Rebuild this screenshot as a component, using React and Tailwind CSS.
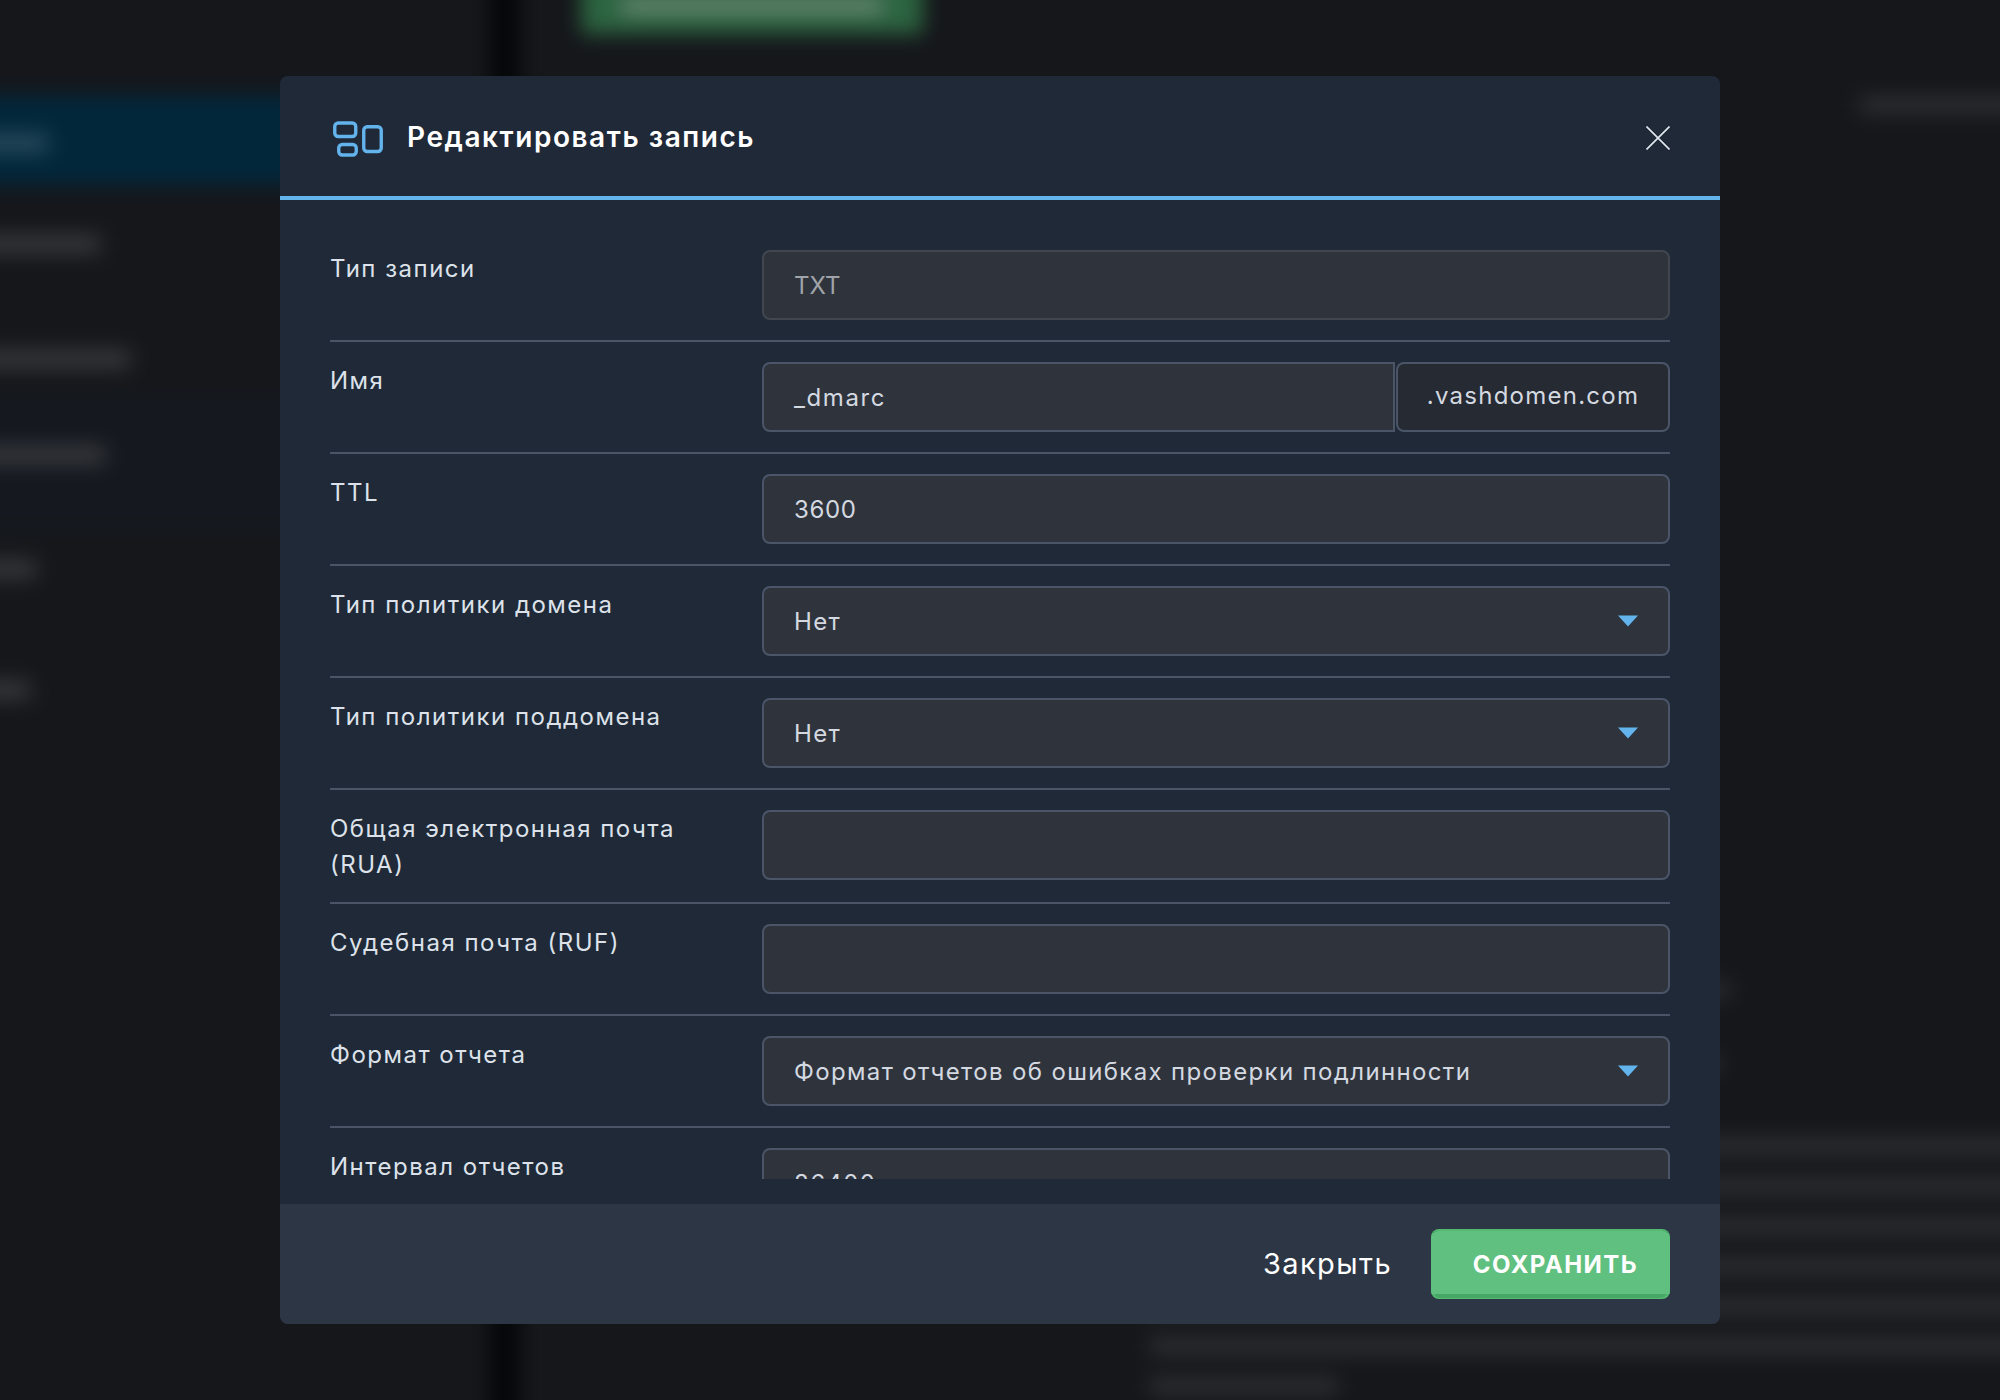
const font = { fontFamily: '"Inter", "Noto Sans", sans-serif' };

function Chevron() {
  return (
    <svg width="20" height="12" viewBox="0 0 20 12" className="shrink-0">
      <path d="M0 0.5h20L10 11.5z" fill="#63b3ed" />
    </svg>
  );
}

function Row({ label, children, last }) {
  return (
    <div className={last ? "flex" : "flex border-b-2 border-[#4a5568] pb-5 mb-5"}>
      <div className="w-[432px] shrink-0 pr-4 pt-px -mb-px text-[24px] leading-[36px] tracking-[1.5px] text-[#dde2ea]">{label}</div>
      <div className="flex-1 min-w-0 flex">{children}</div>
    </div>
  );
}

function Field({ value, disabled, select, className = "rounded-lg", tracking = "tracking-[1.35px]" }) {
  return (
    <div
      className={`h-[70px] flex-1 min-w-0 flex items-center justify-between border-2 pl-[30px] pr-[30px] text-[24px] bg-[#2f343c] ${tracking} ${className} ${
        disabled ? "border-[#41464f] text-[#a0a4aa]" : "border-[#4a5568] text-[#d4d9e1]"
      }`}
    >
      <span className="pt-[2px]">{value}</span>
      {select && <Chevron />}
    </div>
  );
}

function SideLine({ w, mt }) {
  return <div className={`h-[18px] bg-[#38393d] ${mt}`} style={{ width: w }} />;
}

function TextLine({ w = "900px" }) {
  return <div className="h-[14px] mb-[26px] bg-[#313337]" style={{ width: w }} />;
}

function Page() {
  return (
    <div className="h-[1500px] w-[2100px] -ml-[50px] -mt-[50px] flex blur-[10px] bg-[#15171b]">
      <aside className="w-[540px] shrink-0 flex flex-col pt-[145px]">
        <div className="h-[90px] bg-[#02273b] flex items-center">
          <div className="h-[18px] w-[98px] bg-[#2a4c5e] mt-[5px]" />
        </div>
        <SideLine w="150px" mt="mt-[50px]" />
        <SideLine w="180px" mt="mt-[97px]" />
        <div className="mt-[30px] h-[130px] bg-[#15191f] flex flex-col">
          <SideLine w="155px" mt="mt-[48px]" />
        </div>
        <SideLine w="86px" mt="mt-[32px]" />
        <SideLine w="80px" mt="mt-[103px]" />
      </aside>
      <div className="w-[30px] shrink-0 bg-[#050608]" />
      <main className="flex-1 min-w-0">
        <div className="h-[84px] w-[342px] ml-[61px] bg-[#2c6440] pt-[50px] px-[40px]">
          <div className="h-[12px] bg-[#7a8f80]" />
        </div>
        <div className="ml-[1340px] w-[160px] h-[14px] bg-[#313337] mt-[64px]" />
        <div className="ml-[1170px] w-[40px] h-[14px] bg-[#2f3135] mt-[871px]" />
        <div className="ml-[1170px] w-[30px] h-[14px] bg-[#2f3135] mt-[60px]" />
        <div className="ml-[630px] mt-[68px]">
          <TextLine />
          <TextLine />
          <TextLine />
          <TextLine />
          <TextLine />
          <TextLine />
          <TextLine w="188px" />
        </div>
      </main>
    </div>
  );
}

export default function App() {
  return (
    <div className="relative h-[1400px] w-[2000px] overflow-hidden bg-[#15171b]" style={font}>
      <Page />
      <div className="absolute left-[280px] top-[76px] w-[1440px] h-[1248px] rounded-lg overflow-hidden bg-[#1f2937] flex flex-col">
        <header className="h-[124px] shrink-0 border-b-4 border-[#63b3ed] flex items-center pl-[50px] pr-[50px]">
          <svg width="56" height="40" viewBox="0 0 56 40" className="shrink-0 ml-[2px] mr-[19px] mt-[7px]">
            <g fill="none" stroke="#63b3ed" strokeWidth="3.4">
              <rect x="2.75" y="3" width="21" height="13.5" rx="3.5" />
              <rect x="6.75" y="24.5" width="17.5" height="10.5" rx="3.5" />
              <rect x="31.75" y="6.75" width="17.5" height="24.8" rx="3.5" />
            </g>
          </svg>
          <div className="flex-1 pt-[2px] text-[28px] leading-[36px] font-semibold tracking-[1.55px] text-white">Редактировать запись</div>
          <svg width="24" height="24" viewBox="0 0 24 24" className="shrink-0 mt-[4px]">
            <path d="M0.5 0.5l23 23M23.5 0.5l-23 23" stroke="#e2e8f0" strokeWidth="1.6" fill="none" />
          </svg>
        </header>
        <div className="h-[979px] shrink-0 overflow-hidden pt-[50px] pl-[50px] pr-[50px]">
          <Row label="Тип записи"><Field value="TXT" disabled tracking="tracking-[0px]" /></Row>
          <Row label="Имя">
            <Field value="_dmarc" className="rounded-l-lg" tracking="tracking-[1.6px]" />
            <div className="h-[70px] w-[274px] shrink-0 ml-[1px] flex items-center justify-center rounded-lg border-2 border-[#4a5568] bg-[#262a32] text-[24px] tracking-[1.25px] text-[#d4d9e1] pb-[2px]">.vashdomen.com</div>
          </Row>
          <Row label="TTL"><Field value="3600" tracking="tracking-[0.6px]" /></Row>
          <Row label="Тип политики домена"><Field value="Нет" select /></Row>
          <Row label="Тип политики поддомена"><Field value="Нет" select /></Row>
          <Row label="Общая электронная почта (RUA)"><Field value="" /></Row>
          <Row label="Судебная почта (RUF)"><Field value="" /></Row>
          <Row label="Формат отчета"><Field value="Формат отчетов об ошибках проверки подлинности" select /></Row>
          <Row label="Интервал отчетов" last><Field value="86400" /></Row>
        </div>
        <div className="flex-1" />
        <footer className="h-[120px] shrink-0 bg-[#2d3645] flex items-center justify-end pr-[50px]">
          <button className="text-[29px] tracking-[1.4px] text-white mr-[39px]">Закрыть</button>
          <button className="w-[239px] h-[70px] rounded-lg bg-[#55b972] p-0 overflow-hidden">
            <div className="h-[67px] mx-[2px] rounded-b-lg bg-[#47a866]">
              <div className="-mx-[2px] h-[63px] rounded-t-lg bg-[#5fc080] flex items-center justify-center pl-[10px] pt-[5px] text-[24px] font-bold tracking-[1.45px] text-white">СОХРАНИТЬ</div>
            </div>
          </button>
        </footer>
      </div>
    </div>
  );
}
